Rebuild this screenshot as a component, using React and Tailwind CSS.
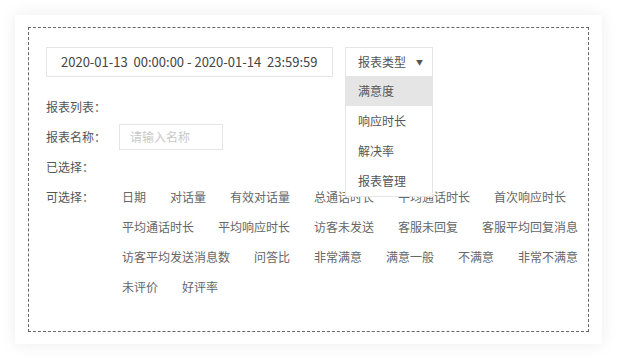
import React from "react";

const items = [
  "日期", "对话量", "有效对话量", "总通话时长", "平均通话时长", "首次响应时长",
  "平均通话时长", "平均响应时长", "访客未发送", "客服未回复", "客服平均回复消息",
  "访客平均发送消息数", "问答比", "非常满意", "满意一般", "不满意", "非常不满意",
  "未评价", "好评率",
];

const menu = ["满意度", "响应时长", "解决率", "报表管理"];

export default function App() {
  return (
    <div className="w-[617px] h-[360px] bg-white pt-[15px] pl-[15px] text-[12px] text-[#555]" style={{ fontFamily: '"Noto Sans CJK SC", "Noto Sans", sans-serif' }}>
      <div className="w-[587px] h-[329px] bg-white shadow-[0_0_16px_rgba(0,0,0,0.08)] pt-[12px] pl-[13px]">
        <div className="w-[561px] h-[305px] border border-dashed border-[#666] pt-[19px] pl-[17px]">
          <div className="flex items-start">
            <div className="w-[287px] h-[30px] border border-[#e5e5e5] flex items-center pl-[14px] text-[13px] text-[#444] whitespace-pre">
              2020-01-13  00:00:00 - 2020-01-14  23:59:59
            </div>
            <div className="relative ml-[12px]">
              <div className="w-[88px] h-[30px] border border-[#e5e5e5] flex items-center pl-[12px] text-[#555]">
                <span>报表类型</span>
                <span className="ml-[10px] text-[7px] text-[#555]">▼</span>
              </div>
              <div className="absolute left-0 top-[29px] w-[88px] bg-white border border-[#e5e5e5] border-t-0 z-10">
                {menu.map((m, i) => (
                  <div key={m} className={`h-[30px] flex items-center pl-[12px] text-[#555] ${i === 0 ? "bg-[#e5e5e5]" : ""}`}>{m}</div>
                ))}
              </div>
            </div>
          </div>
          <div className="mt-[15px]">
            <div className="h-[30px] flex items-center">报表列表：</div>
            <div className="h-[30px] flex items-center">
              <span>报表名称：</span>
              <div className="ml-[13px] w-[104px] h-[26px] border border-[#e5e5e5] flex items-center pl-[10px] text-[#c8c8c8]">请输入名称</div>
            </div>
            <div className="h-[30px] flex items-center">已选择：</div>
            <div className="flex items-start">
              <div className="w-[76px] shrink-0 h-[30px] flex items-center">可选择：</div>
              <div className="w-[466px] flex flex-wrap gap-x-[24px] text-[#666]">
                {items.map((t, i) => (
                  <div key={i} className="h-[30px] flex items-center whitespace-nowrap">{t}</div>
                ))}
              </div>
            </div>
          </div>
        </div>
      </div>
    </div>
  );
}
